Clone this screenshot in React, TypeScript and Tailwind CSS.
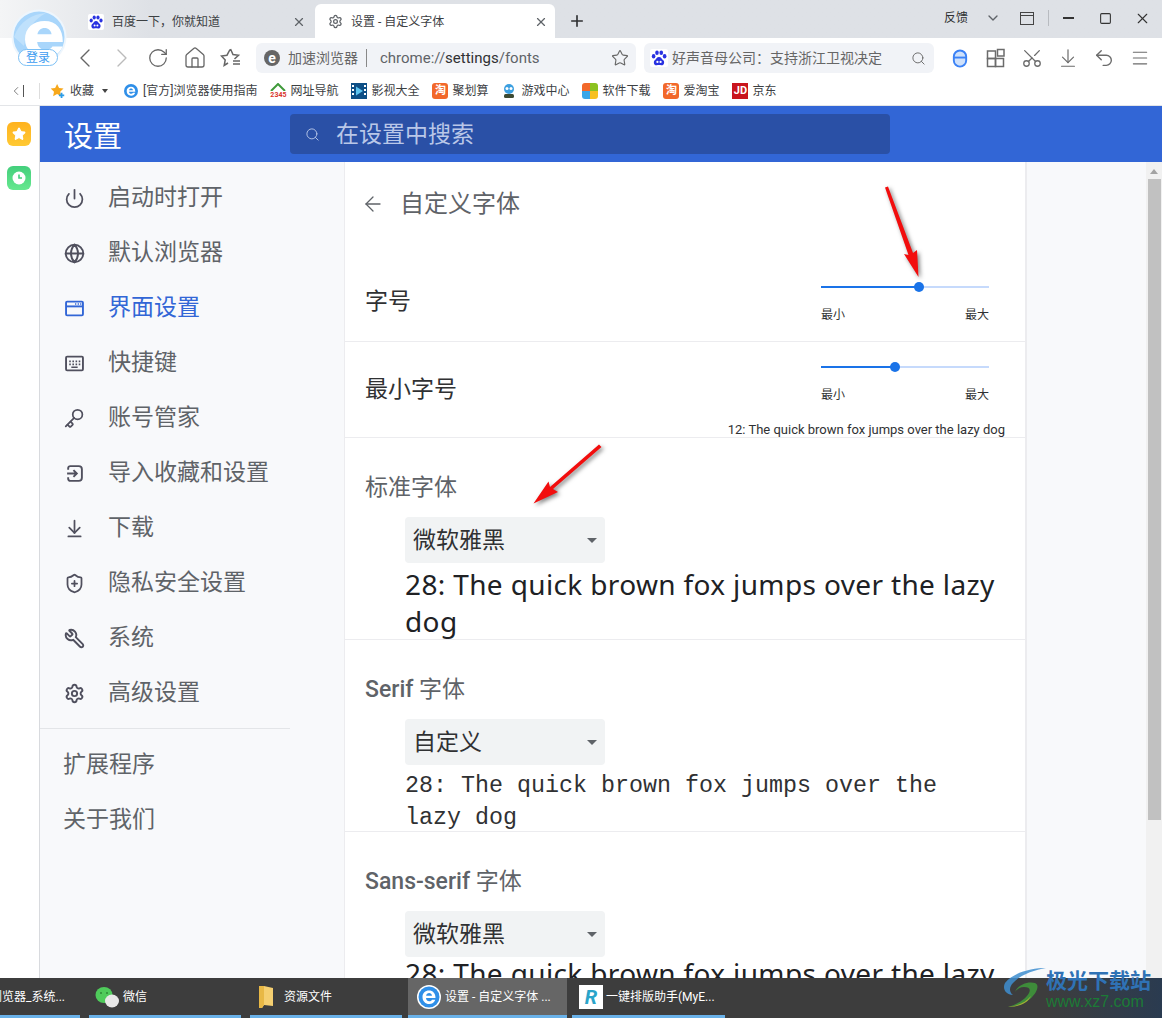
import type { ReactNode } from 'react';
import {
  ArrowDownToLine,
  ArrowLeft,
  ChevronDown,
  ChevronLeft,
  ChevronRight,
  Globe,
  Home,
  Key,
  Menu,
  Plus,
  Power,
  RotateCw,
  Scissors,
  Search,
  Settings,
  ShieldPlus,
  Square,
  Star,
  Undo2,
  Wrench,
  X,
} from 'lucide-react';

function BaiduIcon({ className }: { className: string }) {
  return (
    <svg viewBox="0 0 16 16" className={className}>
      <rect width="16" height="16" rx="2" fill="#fff" />
      <g fill="#2932e1">
        <ellipse cx="3.2" cy="6.4" rx="1.6" ry="2" />
        <ellipse cx="6.2" cy="3.4" rx="1.6" ry="2" />
        <ellipse cx="10" cy="3.4" rx="1.6" ry="2" />
        <ellipse cx="13" cy="6.4" rx="1.6" ry="2" />
        <path d="M8 7c-2 0-2.5 2-4 3.2C2.800 11.500 3.500 15 6 14.500c1.300-.3 2.700-.3 4 0 2.500.5 3.200-3 2-4.300C10.500 9 10 7 8 7z" />
      </g>
      <circle cx="6.600" cy="11.500" r="1" fill="#fff" />
      <circle cx="9.400" cy="11.500" r="1" fill="#fff" />
    </svg>
  );
}

function TaoIcon() {
  return (
    <span className="flex h-4 w-4 items-center justify-center rounded-[3px] bg-[#f2682a] text-[11px] leading-none font-bold text-white">
      淘
    </span>
  );
}

function IeLogo({ className }: { className: string }) {
  return (
    <svg viewBox="0 0 24 24" className={className}>
      <circle cx="12" cy="12" r="12" fill="#fff" />
      <circle cx="12" cy="12" r="10.500" fill="#2f8fe8" />
      <path d="M5.500 12c0-4 2.800-6.500 6.500-6.500s6.500 2.600 6.500 7.500H9c.2 2.200 1.500 3.200 3.200 3.200 1.300 0 2.200-.5 2.800-1.500h3.300c-.9 2.800-3.200 4.300-6.100 4.300-3.800 0-6.700-2.700-6.700-7zm3.600-1.200h5.900c-.2-1.700-1.400-2.700-2.900-2.700s-2.700 1-3 2.700z" fill="#fff" />
    </svg>
  );
}

function PanelIcon({ kind }: { kind: string }) {
  const cls = 'h-[21px] w-[21px] -ml-[1.5px]';
  const drawn = 'h-[19px] w-[19px] -ml-[0.5px]';
  if (kind === 'power') return <Power className={cls} strokeWidth={2} />;
  if (kind === 'globe') return <Globe className={cls} strokeWidth={2.200} />;
  if (kind === 'key') return <Key className={cls + ' -scale-x-100 -rotate-90'} strokeWidth={2} />;
  if (kind === 'download') return <ArrowDownToLine className={cls} strokeWidth={2} />;
  if (kind === 'shield') return <ShieldPlus className={cls} strokeWidth={2} />;
  if (kind === 'wrench') return <Wrench className={cls + ' -scale-x-100'} strokeWidth={2.200} />;
  if (kind === 'gear') return <Settings className={cls} strokeWidth={2.200} />;
  if (kind === 'window') {
    return (
      <svg viewBox="0 0 18 18" className={drawn} fill="none" stroke="currentColor" strokeWidth="1.800">
        <rect x="1" y="2.500" width="16" height="13" rx="1" />
        <path d="M1 7h16" />
        <path d="M9.500 4.700h1.200M12 4.700h1.200M14.300 4.700h1.200" strokeWidth="1.400" />
      </svg>
    );
  }
  if (kind === 'keyboard') {
    return (
      <svg viewBox="0 0 18 18" className={drawn} fill="none" stroke="currentColor" strokeWidth="1.800">
        <rect x="1" y="2.500" width="16" height="13" rx="1" />
        <path d="M4 7h1.500M7 7h1.500M10 7h1.500M13 7h1.500M4 9.800h1.500M7 9.800h1.500M10 9.800h1.500M13 9.800h1.500M6 12.500h6" strokeWidth="1.500" />
      </svg>
    );
  }
  return (
    <svg viewBox="0 0 18 18" className={drawn} fill="none" stroke="currentColor" strokeWidth="1.800">
      <path d="M3 5.500V4a2 2 0 0 1 2-2h8a3 3 0 0 1 3 3v8a3 3 0 0 1-3 3H5a2 2 0 0 1-2-2v-1.500" />
      <path d="M2 9h9M8 5.800 11.200 9 8 12.200" />
    </svg>
  );
}

const navItems = [
  { icon: 'power', label: '启动时打开' },
  { icon: 'globe', label: '默认浏览器' },
  { icon: 'window', label: '界面设置', active: true },
  { icon: 'keyboard', label: '快捷键' },
  { icon: 'key', label: '账号管家' },
  { icon: 'import', label: '导入收藏和设置' },
  { icon: 'download', label: '下载' },
  { icon: 'shield', label: '隐私安全设置' },
  { icon: 'wrench', label: '系统' },
  { icon: 'gear', label: '高级设置' },
];

const bookmarks: { label: string; icon: ReactNode }[] = [
  {
    label: '[官方]浏览器使用指南',
    icon: <IeLogo className="h-4 w-4" />,
  },
  {
    label: '网址导航',
    icon: (
      <span className="relative flex h-4 w-4 items-end justify-center">
        <svg viewBox="0 0 16 8" className="absolute top-0 left-0 h-2 w-4" fill="none" stroke="#3f9a3a" strokeWidth="2">
          <path d="M1 8 8 1l7 7" />
        </svg>
        <span className="text-[7px] leading-[8px] font-bold text-[#d9342b]">2345</span>
      </span>
    ),
  },
  {
    label: '影视大全',
    icon: (
      <svg viewBox="0 0 16 16" className="h-4 w-4">
        <rect width="16" height="16" fill="#0e4f86" />
        <path d="M5 3.500 12 8l-7 4.500z" fill="#5cc4f0" />
        <path d="M1 2h2v2H1zM1 6h2v2H1zM1 10h2v2H1zM13 2h2v2h-2zM13 6h2v2h-2zM13 10h2v2h-2z" fill="#fff" />
      </svg>
    ),
  },
  { label: '聚划算', icon: <TaoIcon /> },
  {
    label: '游戏中心',
    icon: (
      <svg viewBox="0 0 16 16" className="h-4 w-4">
        <circle cx="8" cy="6" r="5" fill="#3b9fe0" />
        <circle cx="6" cy="5.500" r="1.500" fill="#fff" />
        <circle cx="10" cy="5.500" r="1.500" fill="#fff" />
        <rect x="3" y="11" width="10" height="4" rx="1.500" fill="#3d4a33" />
      </svg>
    ),
  },
  {
    label: '软件下载',
    icon: (
      <span className="grid h-4 w-4 grid-cols-2 overflow-hidden rounded-[3px]">
        <span className="bg-[#f2682a]" />
        <span className="bg-[#8cc220]" />
        <span className="bg-[#3aa6e8]" />
        <span className="bg-[#f7c01f]" />
      </span>
    ),
  },
  { label: '爱淘宝', icon: <TaoIcon /> },
  {
    label: '京东',
    icon: (
      <span className="flex h-4 w-4 items-center justify-center bg-[#c9151e] text-[11px] leading-none font-bold text-white">
        JD
      </span>
    ),
  },
];

function Slider({ percent }: { percent: number }) {
  return (
    <div className="w-[168px]">
      <div className="relative h-0.5 bg-[#c6dafc]">
        <div className="h-0.5 bg-[#1a73e8]" style={{ width: `${percent}%` }} />
        <div
          className="absolute top-[-4px] -ml-[5px] h-2.5 w-2.5 rounded-full bg-[#1a73e8]"
          style={{ left: `${percent}%` }}
        />
      </div>
      <div className="mt-[19px] flex justify-between text-xs leading-4 text-[#303133]">
        <span>最小</span>
        <span>最大</span>
      </div>
    </div>
  );
}

function FontSelect({ value }: { value: string }) {
  return (
    <div className="flex h-[46px] w-[200px] items-center justify-between rounded bg-[#f1f3f4] pr-[8px] pl-2 text-[23px] text-[#303133]">
      <span className="pt-0.5">{value}</span>
      <span className="h-0 w-0 border-x-[5px] border-t-[5px] border-x-transparent border-t-[#5f6368]" />
    </div>
  );
}

export default function App() {
  return (
    <div className="relative flex h-[1018px] w-[1162px] flex-col overflow-hidden bg-white font-['Roboto','Noto_Sans_CJK_SC',sans-serif]">
      {/* tab strip */}
      <div className="flex h-[38px] shrink-0 items-end bg-[#dee1e6] bg-linear-to-r from-[#f4f5f6] to-[#dee1e6] to-[13%] pl-[80px] text-xs text-[#3c4043]">
        <div className="flex h-[34px] w-[235px] items-center pt-px pr-[9px] pl-2">
          <BaiduIcon className="h-4 w-4" />
          <span className="ml-2 flex-1">百度一下，你就知道</span>
          <X className="h-3.5 w-3.5 text-[#5f6368]" />
        </div>
        <div className="flex h-[34px] w-[240px] items-center rounded-t-md bg-white pt-px pr-[7px] pl-[13px]">
          <Settings className="h-[15px] w-[15px] text-[#5f6368]" />
          <span className="ml-[8px] flex-1">设置 - 自定义字体</span>
          <X className="h-3.5 w-3.5 text-[#5f6368]" />
        </div>
        <div className="flex h-[34px] w-[44px] items-center justify-center">
          <Plus className="h-[18px] w-[18px] text-[#303133]" strokeWidth={2.200} />
        </div>
        <div className="flex h-[38px] flex-1 items-center justify-end pr-[11px] pb-[2px] text-[#303133]">
          <span>反馈</span>
          <ChevronDown className="ml-[17px] h-4 w-4 text-[#5f6368]" />
          <span className="ml-[19px] flex h-[13px] w-[14px] flex-col border-[1.5px] border-[#444]">
            <span className="h-[3px] border-b border-[#444]" />
          </span>
          <span className="ml-[14px] h-4 w-px bg-[#b8bbc0]" />
          <span className="ml-[14px] h-[1.5px] w-[11px] bg-[#333]" />
          <Square className="ml-[25px] h-[13px] w-[13px] text-[#333]" strokeWidth={2} />
          <X className="ml-[22px] h-[17px] w-[17px] text-[#333]" strokeWidth={1.600} />
        </div>
      </div>

      {/* toolbar */}
      <div className="flex h-10 shrink-0 items-center bg-white pl-[67px] text-[#666]">
        <div className="flex w-[189px] items-center">
          <span className="flex w-[36.5px] justify-center">
            <ChevronLeft className="h-8 w-8" strokeWidth={1} />
          </span>
          <span className="flex w-[36.5px] justify-center text-[#bbb]">
            <ChevronRight className="h-8 w-8" strokeWidth={1} />
          </span>
          <span className="flex w-[36.5px] justify-center">
            <RotateCw className="h-[22px] w-[22px]" strokeWidth={1.400} />
          </span>
          <span className="flex w-[36.5px] justify-center">
            <Home className="h-6 w-6" strokeWidth={1.300} />
          </span>
          <span className="flex w-[36.5px] justify-center">
            <svg viewBox="0 0 22 22" className="h-[22px] w-[22px]" fill="none" stroke="#666" strokeWidth="1.500">
              <path d="M10.500 2 13 7.500l5.500.7-4 3.800M8 16l-3.800 2.500 1-5.500L1.500 9l5.500-.8L10 2.500M13 14h7M13 17h7" />
            </svg>
          </span>
        </div>
        <div className="flex h-[30px] w-[380px] items-center rounded-md bg-[#f1f3f7] pr-[7px] pl-2 text-[15px]">
          <span className="flex h-4 w-4 items-center justify-center rounded-full bg-[#666] text-[14px] leading-none font-bold text-white">e</span>
          <span className="ml-2 text-[14px] text-[#666]">加速浏览器</span>
          <span className="ml-2 h-[18px] w-px bg-[#888]" />
          <span className="ml-[13px] flex-1 text-[#5f6368]">
            chrome://<span className="text-[#303133]">settings</span>/fonts
          </span>
          <Star className="h-[18px] w-[18px]" strokeWidth={1.500} />
        </div>
        <div className="ml-2 flex h-[30px] w-[290px] items-center rounded-md bg-[#f1f3f7] pr-[8px] pl-1.5 text-[14px] text-[#666]">
          <BaiduIcon className="h-[18px] w-[18px]" />
          <span className="ml-[4px] flex-1">好声音母公司：支持浙江卫视决定</span>
          <Search className="h-[15px] w-[15px]" strokeWidth={1.500} />
        </div>
        <div className="ml-2 flex items-center text-[#6b6b6b]">
          <span className="flex w-9 justify-center">
            <svg viewBox="0 0 16 20" className="h-[19px] w-[16px]" fill="none" stroke="#3b82f6" strokeWidth="2">
              <rect x="1.500" y="1.500" width="13" height="17" rx="6.500" fill="#cfe1fb" />
              <path d="M1.500 9h13" />
            </svg>
          </span>
          <span className="flex w-9 justify-center">
            <svg viewBox="0 0 20 20" className="h-5 w-5" fill="none" stroke="#6b6b6b" strokeWidth="1.500">
              <rect x="1.500" y="3" width="8" height="7.500" />
              <rect x="1.500" y="10.500" width="8" height="8" />
              <rect x="9.500" y="10.500" width="8" height="8" />
              <rect x="11.500" y="1.500" width="6.500" height="6.500" />
            </svg>
          </span>
          <span className="flex w-9 justify-center">
            <Scissors className="h-[22px] w-[22px] -rotate-90" strokeWidth={1.400} />
          </span>
          <span className="flex w-9 justify-center">
            <ArrowDownToLine className="h-[22px] w-[22px]" strokeWidth={1.300} />
          </span>
          <span className="flex w-9 justify-center">
            <Undo2 className="h-[22px] w-[22px]" strokeWidth={1.500} />
          </span>
          <span className="flex w-9 justify-center">
            <Menu className="h-5 w-5" strokeWidth={1.300} />
          </span>
        </div>
      </div>

      {/* bookmarks */}
      <div className="flex h-7 shrink-0 items-center border-b border-[#e3e5e8] bg-white pb-0.5 pl-[9px] text-xs whitespace-nowrap text-[#3c4043]">
        <ChevronLeft className="h-5 w-[14px] text-[#666]" strokeWidth={1.400} />
        <span className="h-3 w-px bg-[#555]" />
        <span className="ml-[15px] h-4 w-px bg-[#ddd]" />
        <svg viewBox="0 0 18 18" className="ml-[10px] h-4 w-4">
          <path d="M8 1l2.200 4.700 5 .6-3.700 3.500 1 5L8 12.300 3.500 14.800l1-5L.800 6.300l5-.6z" fill="#f7a81b" />
          <path d="M13 11v6M10 14h6" stroke="#2a9be8" strokeWidth="2" />
        </svg>
        <span className="ml-[4px]">收藏</span>
        <span className="ml-[8px] h-0 w-0 border-x-[3px] border-t-4 border-x-transparent border-t-[#444]" />
        <div className="ml-[15px] flex items-center gap-[13px]">
          {bookmarks.map((b) => (
            <div key={b.label} className="flex items-center gap-1">
              {b.icon}
              <span>{b.label}</span>
            </div>
          ))}
        </div>
      </div>

      {/* page */}
      <div className="flex min-h-0 flex-1">
        <div className="flex w-10 shrink-0 flex-col items-center gap-5 border-r border-[#d8dade] bg-white pt-4 pr-px">
          <div className="flex h-6 w-6 items-center justify-center rounded-md bg-linear-to-b from-[#ffb21e] to-[#ffc933]">
            <Star className="h-3.5 w-3.5 fill-white text-white" />
          </div>
          <div className="flex h-6 w-6 items-center justify-center rounded-md bg-linear-to-b from-[#43cf7c] to-[#66e88f]">
            <svg viewBox="0 0 14 14" className="h-3.5 w-3.5">
              <circle cx="7" cy="7" r="6.500" fill="#fff" />
              <path d="M7 3.500V7h3" fill="none" stroke="#43cf7c" strokeWidth="1.600" />
            </svg>
          </div>
        </div>

        <div className="flex min-w-0 flex-1 flex-col">
          <div className="flex h-14 shrink-0 items-center bg-[#3266d6] pl-6">
            <span className="w-[226px] pt-[7px] text-[29px] text-white">设置</span>
            <div className="flex h-10 w-[600px] items-center rounded-sm bg-[#2a50a6] pl-[15px] text-[23px] text-[#b9c7e8]">
              <Search className="h-[15px] w-[15px]" strokeWidth={1.500} />
              <span className="ml-[16px] pt-[3px]">在设置中搜索</span>
            </div>
          </div>

          <div className="flex min-h-0 flex-1">
            {/* sidebar */}
            <div className="w-[304px] shrink-0 bg-[#f8f9fb] pt-[9px] text-[23px] text-[#5f6368]">
              <div className="w-[250px]">
                {navItems.map((item) => (
                  <div
                    key={item.label}
                    className={`flex h-[55px] items-center pl-[25px] ${item.active ? 'text-[#3266d6]' : ''}`}
                  >
                    <span className={`flex w-[43px] ${item.active ? 'text-[#3266d6]' : 'text-[#50505e]'}`}>
                      <PanelIcon kind={item.icon} />
                    </span>
                    {item.label}
                  </div>
                ))}
                <div className="mt-[7px] border-t border-[#e3e5e8] pt-[9px]">
                  <div className="flex h-[55px] items-center pl-[23px]">扩展程序</div>
                  <div className="flex h-[55px] items-center pl-[23px]">关于我们</div>
                </div>
              </div>
            </div>

            {/* font settings */}
            <div className="w-[683px] shrink-0 border-r-2 border-l border-x-[#ececef] bg-white">
              <div className="flex h-[84px] items-center pl-5 text-[24px] text-[#5f6368]">
                <ArrowLeft className="-ml-1 h-6 w-6" strokeWidth={1.300} />
                <span className="ml-[15px]">自定义字体</span>
              </div>
              <div className="flex h-[96px] items-start justify-between border-b border-[#ececef] pr-[36px] pl-5 text-[23px] text-[#303133]">
                <span className="mt-[40px] leading-8">字号</span>
                <div className="mt-[40px]">
                  <Slider percent={58.3} />
                </div>
              </div>
              <div className="relative h-[96px] border-b border-[#ececef] pl-5 text-[23px] text-[#303133]">
                <span className="absolute top-[32px] left-5 leading-8">最小字号</span>
                <div className="absolute top-[24px] left-[476px]">
                  <Slider percent={44} />
                </div>
                <span className="absolute top-[80px] right-[20px] text-[13px] leading-4 text-[#303133]">
                  12: The quick brown fox jumps over the lazy dog
                </span>
              </div>

              <div className="h-[202px] border-b border-[#ececef] pt-[34px] pl-5 text-[23px] leading-8 text-[#5f6368]">
                <div>标准字体</div>
                <div className="mt-[13px] pl-10">
                  <FontSelect value="微软雅黑" />
                  <p className="mt-[3px] pr-[20px] font-['Noto_Sans','Noto_Sans_CJK_SC',sans-serif] text-[28px] leading-[37px] tracking-[0.36px] text-[#202124]">
                    28: The quick brown fox jumps over the lazy dog
                  </p>
                </div>
              </div>

              <div className="h-[192px] border-b border-[#ececef] pt-[34px] pl-5 text-[23px] leading-8 text-[#5f6368]">
                <div>
                  <span className="font-medium">Serif</span> 字体
                </div>
                <div className="mt-[13px] pl-10">
                  <FontSelect value="自定义" />
                  <p className="mt-[5px] pr-[20px] font-['Liberation_Mono',monospace] text-[23.34px] leading-8 text-[#303133]">
                    28: The quick brown fox jumps over the lazy dog
                  </p>
                </div>
              </div>

              <div className="pt-[34px] pl-5 text-[23px] leading-8 text-[#5f6368]">
                <div>
                  <span className="font-medium">Sans-serif</span> 字体
                </div>
                <div className="mt-[13px] pl-10">
                  <FontSelect value="微软雅黑" />
                  <p className="-mt-0.5 pr-[20px] font-['Noto_Sans','Noto_Sans_CJK_SC',sans-serif] text-[28px] leading-[37px] tracking-[0.36px] text-[#202124]">
                    28: The quick brown fox jumps over the lazy dog
                  </p>
                </div>
              </div>
            </div>

            <div className="flex-1 bg-[#f8f9fb]" />

            {/* scrollbar */}
            <div className="flex w-4 shrink-0 flex-col items-center bg-[#f1f1f1] pt-[7px]">
              <span className="h-0 w-0 border-x-[4px] border-b-[5px] border-x-transparent border-b-[#a3a3a3]" />
              <span className="mt-[5px] h-[641px] w-[13px] bg-[#c1c1c1]" />
            </div>
          </div>
        </div>
      </div>

      {/* taskbar */}
      <div className="z-10 flex h-10 shrink-0 bg-[#3d3d3d] bg-linear-to-r from-[#3d3d3d] via-[#3d3d3d] via-90% to-[#2a3b50] text-xs text-white">
        <div className="flex h-10 w-20 items-center justify-end overflow-hidden border-b-[3px] border-[#69b1e8] pt-px pr-[15px] whitespace-nowrap">
          浏览器_系统...
        </div>
        <div className="ml-[9px] flex h-10 w-[152px] items-center border-b-[3px] border-[#69b1e8] pt-px pl-[6px]">
          <svg viewBox="0 0 24 22" className="h-[22px] w-6">
            <ellipse cx="9" cy="9" rx="8.500" ry="8" fill="#4fcb5b" />
            <circle cx="6" cy="7" r="1" fill="#2c8a36" />
            <circle cx="12" cy="7" r="1" fill="#2c8a36" />
            <ellipse cx="17" cy="15" rx="7" ry="6.500" fill="#e8e8e8" />
          </svg>
          <span className="ml-[4px]">微信</span>
        </div>
        <div className="ml-[9px] flex h-10 w-[152px] items-center border-b-[3px] border-[#69b1e8] pt-px pl-[8px]">
          <svg viewBox="0 0 16 24" className="h-6 w-4">
            <path d="M1 1h5l9 2v18l-9-1-2 3H1z" fill="#f5cf70" />
            <path d="M1 1h5v19l-2 3H1z" fill="#e8b845" />
          </svg>
          <span className="ml-[10px]">资源文件</span>
        </div>
        <div className="ml-[6px] flex h-10 w-[159px] items-center border-b-[3px] border-[#69b1e8] bg-[#666] pt-px pl-[9px]">
          <IeLogo className="h-6 w-6" />
          <span className="ml-[4px] whitespace-nowrap">设置 - 自定义字体 ...</span>
        </div>
        <div className="ml-[5px] flex h-10 w-[153px] items-center border-b-[3px] border-[#69b1e8] pt-px pl-[7px]">
          <span className="flex h-6 w-6 items-center justify-center bg-white text-[20px] leading-none font-bold text-[#2aa4c9] italic">
            R
          </span>
          <span className="ml-[3px] whitespace-nowrap">一键排版助手(MyE...</span>
        </div>
      </div>

      {/* browser logo */}
      <div className="absolute top-[9px] left-[11px] z-20 h-[57px] w-[56px]">
        <svg viewBox="0 0 56 56" className="h-14 w-14">
          <circle cx="28" cy="28" r="27.500" fill="#eef6fd" />
          <circle cx="28" cy="28" r="25.500" fill="#a9d6fb" />
          <path d="M3 28C8 13 21 5 35 4 22 11 15 22 13 37z" fill="#bfe1fc" />
          <g transform="translate(14 12) scale(1.35) translate(-12 -13.5)">
            <path d="M12 27c0-8.500 6.200-13.500 14.500-13.500 9 0 13.500 6 13.500 15.500H21c.5 3.800 2.800 5.800 6.300 5.800 2.500 0 4-1 5-2.500h7.500c-1.800 5-6.700 8-12.700 8C18 40.500 12 35 12 27zm9.200-3.600h10.500c-.4-3-2.400-4.800-5.200-4.800s-4.800 1.800-5.300 4.800z" fill="#fff" />
          </g>
        </svg>
        <span className="absolute top-[40px] left-[7px] flex h-[17px] w-[40px] items-center justify-center rounded-full border border-[#7cc0f5] bg-white text-[12px] leading-none text-[#3d9cf0]">
          登录
        </span>
      </div>

      {/* red annotation arrows */}
      <svg viewBox="0 0 1162 1018" className="pointer-events-none absolute inset-0 z-20 h-[1018px] w-[1162px] drop-shadow-[2px_2px_2px_rgba(0,0,0,0.5)]">
        <path d="M885 187.500 888 186.500 913 253 917 250 918.500 277 904 254 908.500 255z" fill="#f20d0d" />
        <path d="M599 444.500 601.500 447 553 489 558 492 533.500 503.500 548.500 481.500 550 487z" fill="#f20d0d" />
      </svg>

      {/* watermark */}
      <div className="pointer-events-none absolute top-[966px] left-[1002px] z-20 flex">
        <svg viewBox="0 0 44 44" className="h-[44px] w-[44px] opacity-85">
          <path d="M44 2C30 2 12 6 3 17c-3 6 1 12 8 12-4-3-4-8 0-12C18 9 32 4 44 2z" fill="#3f8fd0" />
          <path d="M13 26c3-8 14-11 20-9 5 2 2 10-5 16-5 4-12 7-22 8 10-3 18-8 21-14 2-4 0-6-5-6-4 0-7 2-9 5z" fill="#3f9a3a" />
          <path d="M6 41c10-1 18-5 23-11-3 7-12 11-23 11z" fill="#b5c534" />
        </svg>
        <div className="flex flex-col font-['Noto_Sans_CJK_SC',sans-serif]">
          <span className="mt-[1px] text-[21px] leading-[25px] font-bold text-[#2f72b5]">极光下载站</span>
          <span className="mt-[3px] font-['Liberation_Sans',sans-serif] text-[16px] leading-[14px] text-[#1c7a36]">www.xz7.com</span>
        </div>
      </div>
    </div>
  );
}
